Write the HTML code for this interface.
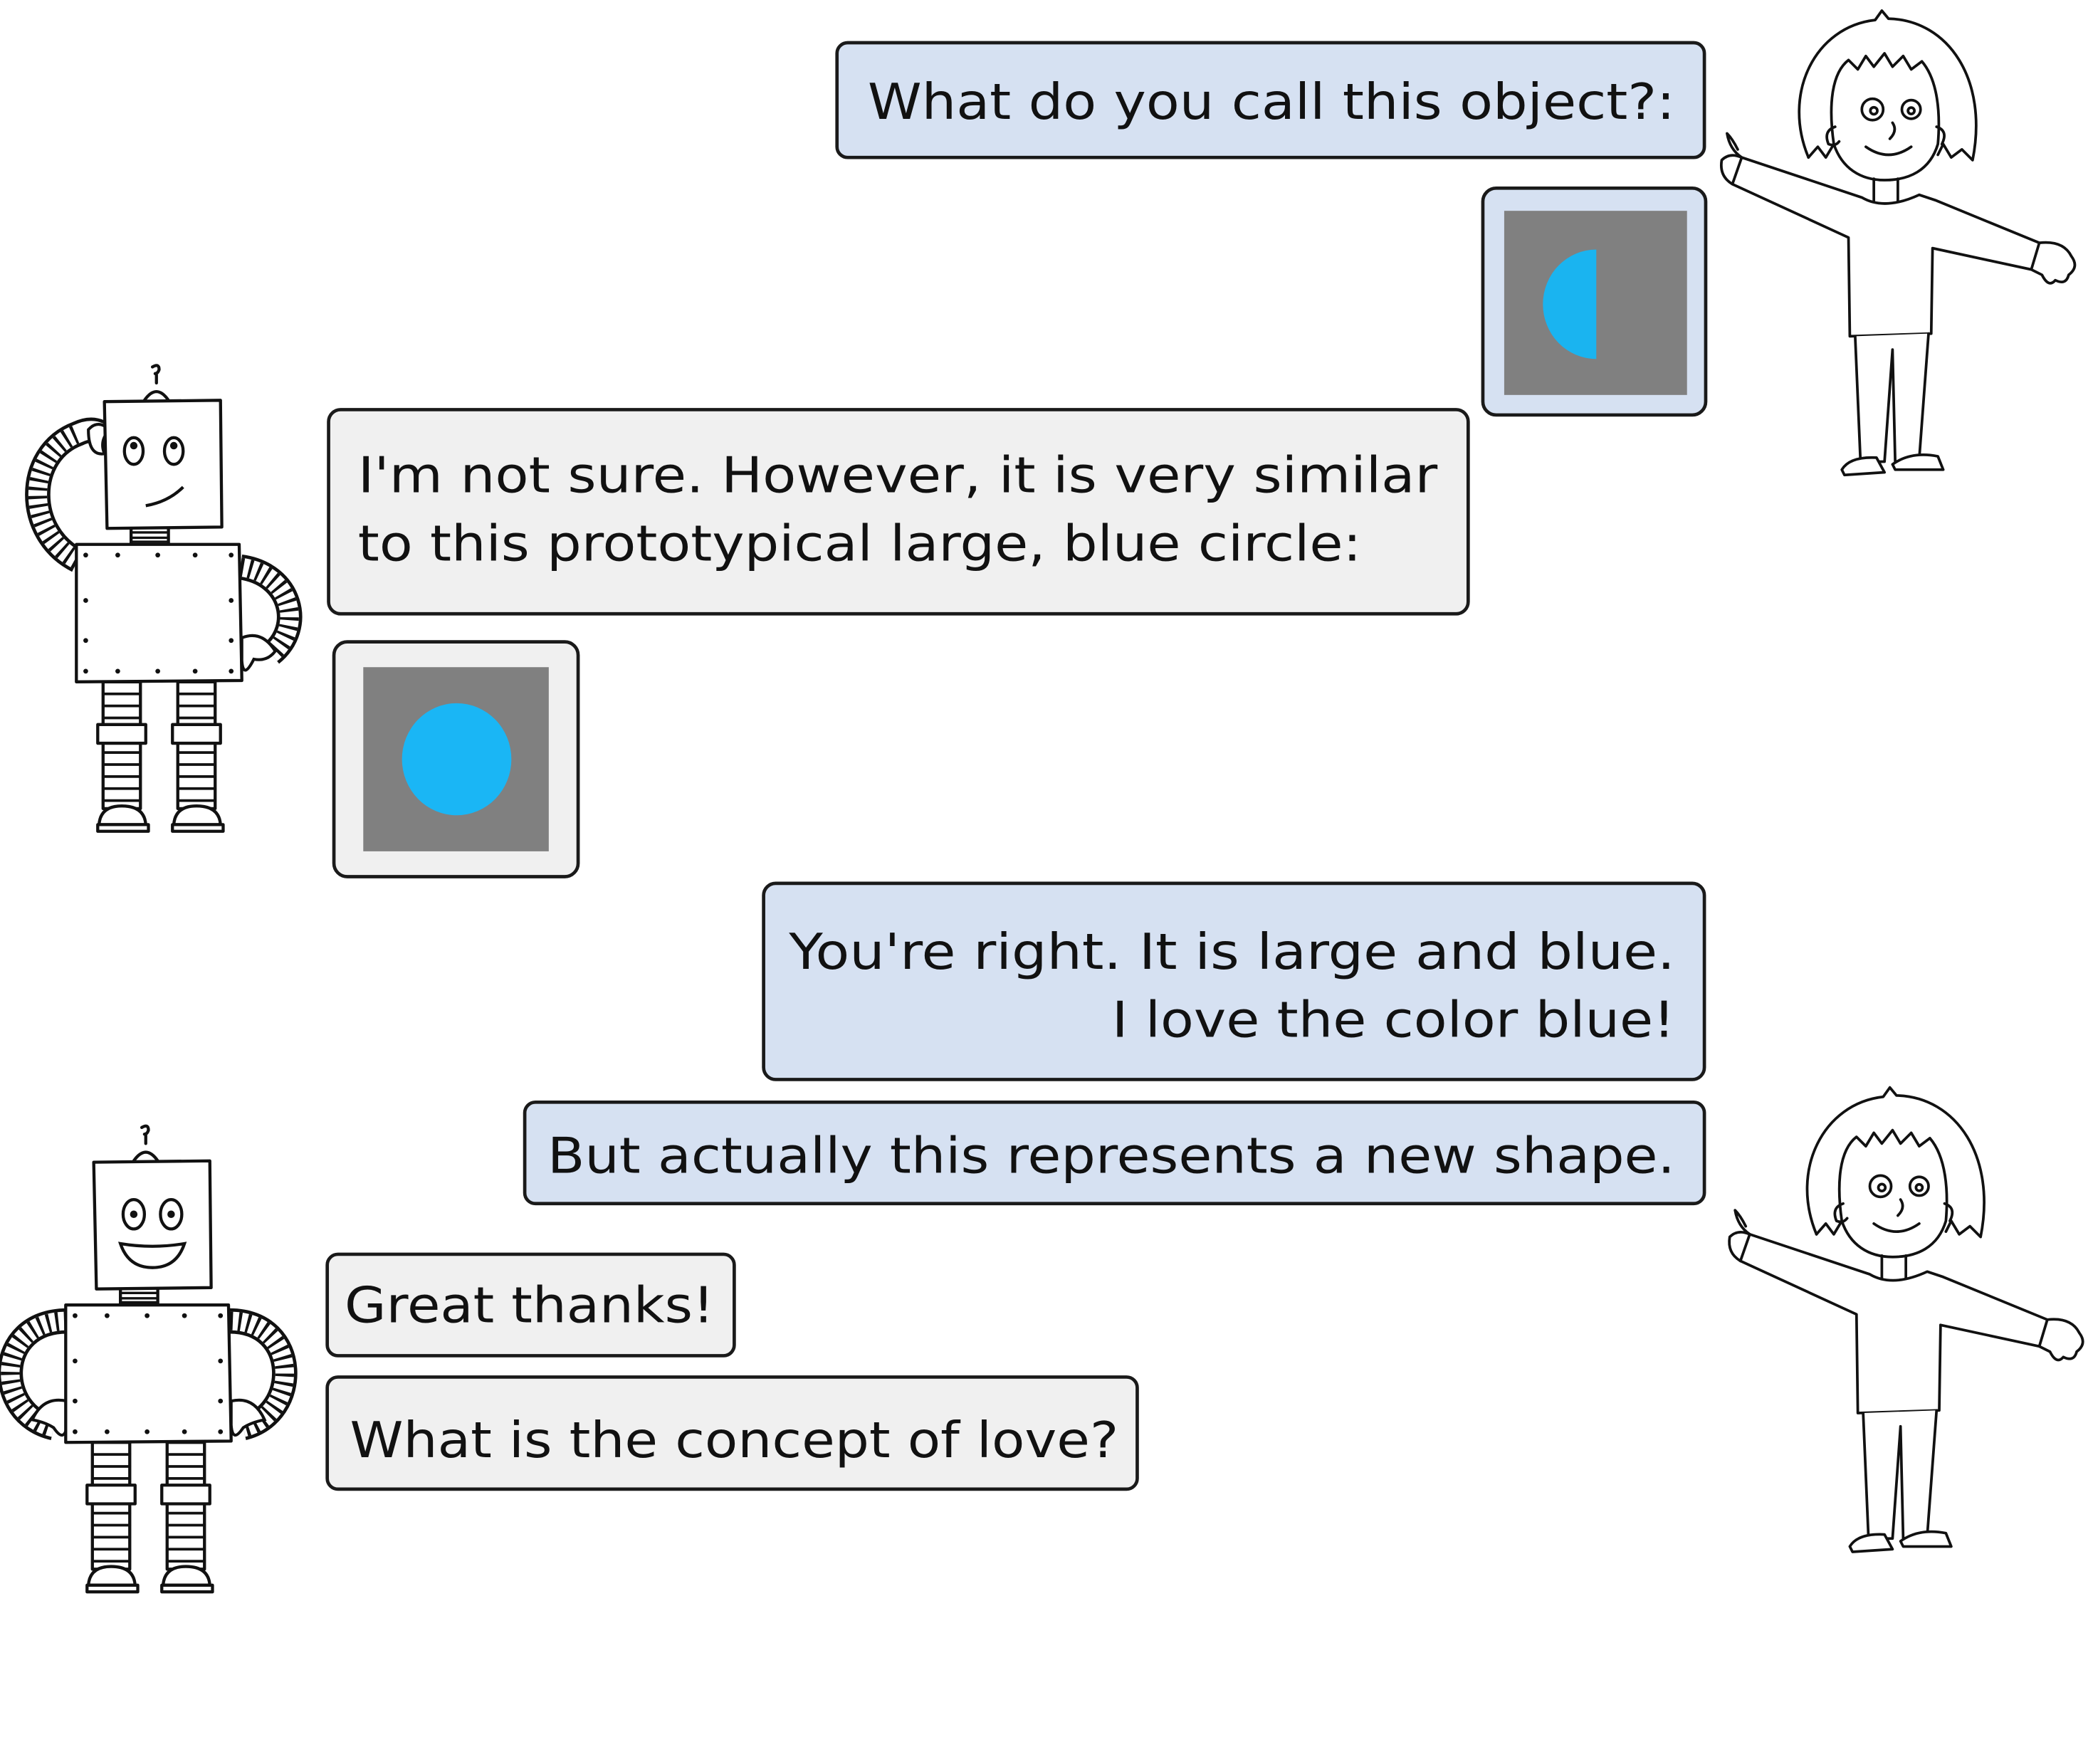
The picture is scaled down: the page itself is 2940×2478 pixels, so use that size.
<!DOCTYPE html>
<html><head><meta charset="utf-8">
<style>
html,body{margin:0;padding:0;background:#fff;}
svg{display:block;}
text{font-family:"DejaVu Sans","Liberation Sans",sans-serif;font-size:37px;fill:#111;}
</style></head>
<body>
<svg width="2940" height="2478" viewBox="0 0 1568 1322" xmlns="http://www.w3.org/2000/svg">
<defs>
<g id="robotBase" fill="none" stroke="#111" stroke-width="2.3" stroke-linejoin="round" stroke-linecap="round">
  <path d="M30,0 Q39,-13 48,0" fill="#fff"/>
  <path d="M39,-13 L39,-19"/>
  <path d="M36,-25 Q41,-28 41,-23 Q40,-20 38,-20"/>
  <rect x="20" y="95" width="28" height="14" fill="#fff"/>
  <path d="M20,99 H48 M20,103 H48 M20,106 H48" stroke-width="1.8"/>
  <path d="M0,1 L87,0 L88,95 L2,96 Z" fill="#fff"/>
  <path d="M-21,108 L101,108 L103,210 L-21,211 Z" fill="#fff"/>
  <g fill="#111" stroke="none">
    <circle cx="-14" cy="116" r="1.8"/><circle cx="10" cy="116" r="1.8"/><circle cx="40" cy="116" r="1.8"/><circle cx="68" cy="116" r="1.8"/><circle cx="95" cy="116" r="1.8"/>
    <circle cx="-14" cy="150" r="1.8"/><circle cx="95" cy="150" r="1.8"/>
    <circle cx="-14" cy="180" r="1.8"/><circle cx="95" cy="180" r="1.8"/>
    <circle cx="-14" cy="203" r="1.8"/><circle cx="10" cy="203" r="1.8"/><circle cx="40" cy="203" r="1.8"/><circle cx="68" cy="203" r="1.8"/><circle cx="95" cy="203" r="1.8"/>
  </g>
  <g fill="#fff">
    <rect x="-1" y="211" width="28" height="95"/>
    <rect x="55" y="211" width="28" height="95"/>
  </g>
  <path d="M-1,220H27M-1,229H27M-1,238H27M-1,264H27M-1,273H27M-1,282H27M-1,291H27M-1,300H27 M55,220H83M55,229H83M55,238H83M55,264H83M55,273H83M55,282H83M55,291H83M55,300H83" stroke-width="2"/>
  <rect x="-5" y="243" width="36" height="14" fill="#fff"/>
  <rect x="51" y="243" width="36" height="14" fill="#fff"/>
  <path d="M-4,318 Q-3,304 13,304 Q30,304 31,318 Z" fill="#fff"/>
  <path d="M-5,318 H33 V323 H-5 Z" fill="#fff"/>
  <path d="M52,318 Q53,304 69,304 Q86,304 87,318 Z" fill="#fff"/>
  <path d="M51,318 H89 V323 H51 Z" fill="#fff"/>
</g>
</defs>

<g stroke="#1a1a1a" stroke-width="2.5">
  <rect x="627" y="32" width="650" height="86" rx="8" fill="#d6e1f2"/>
  <rect x="1111" y="141" width="167" height="170" rx="10" fill="#d6e1f2"/>
  <rect x="246" y="307" width="854" height="153" rx="9" fill="#f0f0f0"/>
  <rect x="250" y="481" width="183" height="176" rx="10" fill="#f0f0f0"/>
  <rect x="572" y="662" width="705" height="147" rx="9" fill="#d6e1f2"/>
  <rect x="393" y="826" width="884" height="76" rx="8" fill="#d6e1f2"/>
  <rect x="245" y="940" width="305" height="76" rx="8" fill="#f0f0f0"/>
  <rect x="245" y="1032" width="607" height="84" rx="8" fill="#f0f0f0"/>
</g>
<rect x="1127" y="158" width="137" height="138" fill="#808080"/>
<path d="M1196,187 A40,41 0 0 0 1196,269 Z" fill="#1ab4f0"/>
<rect x="272" y="500" width="139" height="138" fill="#808080"/>
<ellipse cx="342" cy="569" rx="41" ry="42" fill="#1ab6f5"/>

<text x="650" y="89" textLength="605" lengthAdjust="spacingAndGlyphs">What do you call this object?:</text>
<text x="268" y="369" textLength="809" lengthAdjust="spacingAndGlyphs">I'm not sure. However, it is very similar</text>
<text x="268" y="420" textLength="752" lengthAdjust="spacingAndGlyphs">to this prototypical large, blue circle:</text>
<text x="591" y="726" textLength="664" lengthAdjust="spacingAndGlyphs">You're right. It is large and blue.</text>
<text x="833" y="777" textLength="422" lengthAdjust="spacingAndGlyphs">I love the color blue!</text>
<text x="410" y="879" textLength="845" lengthAdjust="spacingAndGlyphs">But actually this represents a new shape.</text>
<text x="258" y="991" textLength="277" lengthAdjust="spacingAndGlyphs">Great thanks!</text>
<text x="262" y="1092" textLength="576" lengthAdjust="spacingAndGlyphs">What is the concept of love?</text>

<!-- ROBOT 1 -->
<g transform="translate(78,300)">
  <path d="M-20,120 C-60,100 -60,40 -20,25 Q-5,18 3,30" stroke="#111" stroke-width="19" fill="none"/>
  <path d="M-20,120 C-60,100 -60,40 -20,25 Q-5,18 3,30" stroke="#fff" stroke-width="14" fill="none"/>
  <path d="M-20,120 C-60,100 -60,40 -20,25" stroke="#111" stroke-width="14" fill="none" stroke-dasharray="2.2 4.2"/>
  <path d="M-12,22 Q-5,14 4,22 Q-4,30 0,40 Q-12,42 -12,22 Z" fill="#fff" stroke="#111" stroke-width="2.2"/>
  <path d="M102,125 C140,130 150,170 125,190" stroke="#111" stroke-width="19" fill="none"/>
  <path d="M102,125 C140,130 150,170 125,190" stroke="#fff" stroke-width="14" fill="none"/>
  <path d="M102,125 C140,130 150,170 125,190" stroke="#111" stroke-width="14" fill="none" stroke-dasharray="2.2 4.2"/>
  <path d="M103,178 Q118,172 128,188 Q122,196 112,194 Q104,210 103,195 Z" fill="#fff" stroke="#111" stroke-width="2.2"/>
  <use href="#robotBase"/>
  <g fill="none" stroke="#111" stroke-width="2.3">
    <ellipse cx="22" cy="38" rx="7" ry="10"/>
    <ellipse cx="52" cy="38" rx="7" ry="10"/>
    <path d="M31,79 Q48,76 59,65"/>
  </g>
  <circle cx="22" cy="34" r="2.8" fill="#111"/>
  <circle cx="52" cy="34" r="2.8" fill="#111"/>
</g>

<!-- ROBOT 2 -->
<g transform="translate(70,870)">
  <path d="M-20,120 C-75,120 -75,190 -30,200" stroke="#111" stroke-width="19" fill="none"/>
  <path d="M-20,120 C-75,120 -75,190 -30,200" stroke="#fff" stroke-width="14" fill="none"/>
  <path d="M-20,120 C-75,120 -75,190 -30,200" stroke="#111" stroke-width="14" fill="none" stroke-dasharray="2.2 4.2"/>
  <path d="M-20,180 Q-38,176 -46,194 Q-36,196 -30,200 Q-22,212 -20,198 Z" fill="#fff" stroke="#111" stroke-width="2.2"/>
  <path d="M102,120 C155,120 155,190 112,200" stroke="#111" stroke-width="19" fill="none"/>
  <path d="M102,120 C155,120 155,190 112,200" stroke="#fff" stroke-width="14" fill="none"/>
  <path d="M102,120 C155,120 155,190 112,200" stroke="#111" stroke-width="14" fill="none" stroke-dasharray="2.2 4.2"/>
  <path d="M103,180 Q120,176 128,194 Q118,196 112,200 Q104,212 103,198 Z" fill="#fff" stroke="#111" stroke-width="2.2"/>
  <use href="#robotBase"/>
  <g fill="none" stroke="#111" stroke-width="2.3">
    <ellipse cx="30" cy="40" rx="8" ry="11"/>
    <ellipse cx="58" cy="40" rx="8" ry="11"/>
    <path d="M20,62 Q44,66 68,62 Q62,80 44,80 Q26,80 20,62 Z"/>
  </g>
  <circle cx="30" cy="40" r="2.8" fill="#111"/>
  <circle cx="58" cy="40" r="2.8" fill="#111"/>
</g>

<defs>
<g id="girl" fill="none" stroke="#111" stroke-width="2" stroke-linejoin="round" stroke-linecap="round">
  <path d="M1355,118 C1335,70 1360,20 1405,15 L1410,8 L1415,14 C1460,15 1490,60 1478,120 L1470,112 L1462,118 L1456,108 L1452,116" fill="#fff"/>
  <path d="M1355,118 L1362,110 L1368,118 L1374,108" />
  <path d="M1374,108 C1370,80 1372,55 1385,45 L1392,52 L1398,42 L1404,50 L1412,40 L1418,50 L1426,42 L1432,52 L1440,46 C1452,60 1454,85 1452,108 C1446,128 1430,135 1412,135 C1394,135 1380,126 1374,108 Z" fill="#fff"/>
  <path d="M1375,95 Q1366,98 1370,108 Q1375,110 1378,106"/>
  <path d="M1451,95 Q1460,98 1455,108"/>
  <circle cx="1403" cy="82" r="8"/><circle cx="1432" cy="82" r="7"/>
  <circle cx="1404" cy="83" r="2.6"/><circle cx="1432" cy="83" r="2.4"/>
  <path d="M1418,92 Q1422,98 1416,104"/>
  <path d="M1398,110 Q1415,122 1432,110"/>
  <path d="M1404,134 L1404,152 M1422,134 L1422,152"/>
  <path d="M1395,148 L1305,118 L1298,138 L1385,178 L1386,252 L1447,250 L1448,186 L1522,202 L1528,182 L1450,150 L1438,146 Q1412,158 1395,148 Z" fill="#fff"/>
  <path d="M1305,118 Q1296,112 1294,100 Q1298,104 1302,112 M1298,138 Q1288,132 1290,120 Q1296,114 1305,118"/>
  <path d="M1528,182 Q1546,180 1552,192 Q1558,200 1550,206 Q1548,214 1540,210 Q1535,216 1530,206 L1522,202"/>
  <path d="M1390,252 L1394,346 L1412,346 L1418,262 L1420,346 L1438,344 L1445,250" fill="#fff"/>
  <path d="M1380,352 Q1386,342 1406,343 L1412,354 L1382,356 Z" fill="#fff"/>
  <path d="M1418,348 Q1432,338 1452,342 L1456,352 L1420,352 Z" fill="#fff"/>
</g>
</defs>
<use href="#girl"/>
<use href="#girl" transform="translate(6,807)"/>
</svg>
</body></html>
